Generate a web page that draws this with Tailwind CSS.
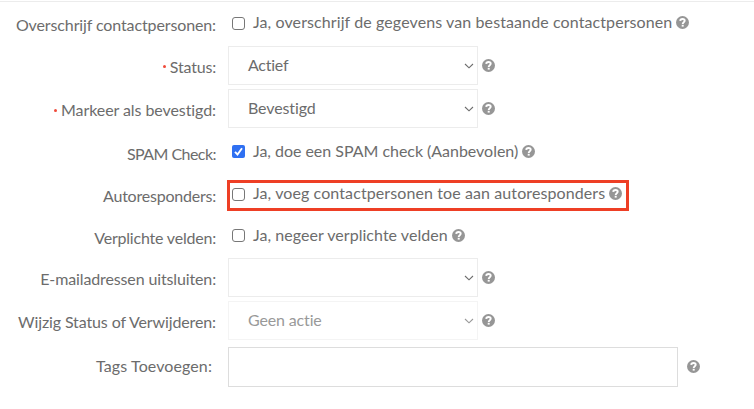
<!DOCTYPE html>
<html lang="nl"><head><meta charset="utf-8"><title>Importinstellingen</title>
<script src="https://cdn.jsdelivr.net/npm/@tailwindcss/browser@4"></script></head>
<body class="bg-white">
<svg class="hidden">
<symbol id="help" viewBox="0 0 13 13"><circle cx="6.5" cy="6.5" r="6.5" fill="#969696"/><path d="M4.200 4.900C4.300 3.600 5.200 3 6.500 3c1.300 0 2.200.65 2.200 1.800C8.700 6.200 6.700 6.150 6.700 7.900" fill="none" stroke="#fff" stroke-width="1.900"/><rect x="5.700" y="8.800" width="2" height="1.800" fill="#fff"/></symbol>
<symbol id="chev" viewBox="0 0 10 6"><path d="M1 1l4 3.800L9 1" fill="none" stroke="currentColor" stroke-width="1.100"/></symbol>
</svg>
<form class="w-[754px] h-[409px] overflow-hidden pt-px font-['Lato',sans-serif] text-[16px] leading-6 text-[#6c6c6c] whitespace-nowrap">
<div class="border-t border-[#ececec]"></div>
<div class="flex h-[42px] items-center gap-3"><label class="w-[204px] ml-3 text-right pt-[3px]"><span class="tracking-[-0.12px]">Overschrijf contactpersonen:</span></label><div class="flex items-center pl-1"><i class="size-[13px] rounded-[3px] border border-[#777] mr-2"></i><span class="tracking-[0.1px] pb-[2px]">Ja, overschrijf de gegevens van bestaande contactpersonen</span><svg class="size-[13px] ml-1 -mt-px"><use href="#help"/></svg></div></div>
<div class="flex h-[43px] items-center gap-3"><label class="w-[204px] ml-3 flex items-center justify-end gap-1 pt-[2px]"><i class="size-[3px] rounded-full bg-[#f04a3a]"></i><span class="tracking-[-0.18px]">Status:</span></label><div class="flex items-center"><div class="flex w-[250px] h-[39px] items-center justify-between border border-[#ececec] pl-[19px] pr-[3px]"><span class="tracking-[-0.25px] pb-[2px]">Actief</span><svg class="w-[10px] h-[6px]"><use href="#chev"/></svg></div><svg class="size-[13px] ml-1"><use href="#help"/></svg></div></div>
<div class="flex h-[43px] items-center gap-3"><label class="w-[204px] ml-3 flex items-center justify-end gap-1 pt-[3px]"><i class="size-[3px] rounded-full bg-[#f04a3a]"></i><span class="tracking-[-0.08px]">Markeer als bevestigd:</span></label><div class="flex items-center"><div class="flex w-[250px] h-[39px] items-center justify-between border border-[#ececec] pl-[19px] pr-[3px]"><span class="tracking-[-0.12px] pb-px">Bevestigd</span><svg class="w-[10px] h-[6px]"><use href="#chev"/></svg></div><svg class="size-[13px] ml-1"><use href="#help"/></svg></div></div>
<div class="flex h-[43px] items-center gap-3"><label class="w-[204px] ml-3 text-right pt-[4px]"><span class="tracking-[-0.55px]">SPAM Check:</span></label><div class="flex items-center pl-1"><svg class="size-[13px] mr-2" viewBox="0 0 13 13"><rect width="13" height="13" rx="2" fill="#2f70f2"/><path d="M3 6.800l2.500 2.700L10 3.300" fill="none" stroke="#fff" stroke-width="1.900"/></svg><span class="tracking-[-0.03px] pb-[2px]">Ja, doe een SPAM check (Aanbevolen)</span><svg class="size-[13px] ml-1"><use href="#help"/></svg></div></div>
<div class="flex h-[42px] items-center gap-3"><label class="w-[204px] ml-3 text-right pt-[3px]"><span class="tracking-[-0.22px]">Autoresponders:</span></label><div class="flex items-center w-[402px] h-[31px] -ml-px border-[3px] border-[#ee3f25] pl-[2px] mt-[2px] pb-[2px]"><i class="size-[13px] rounded-[3px] border border-[#777] mr-2"></i><span class="tracking-[0.1px] pb-[2px]">Ja, voeg contactpersonen toe aan autoresponders</span><svg class="size-[13px] ml-1 -mt-px"><use href="#help"/></svg></div></div>
<div class="flex h-[41px] items-center gap-3"><label class="w-[204px] ml-3 text-right pt-[4px]"><span class="tracking-[-0.2px]">Verplichte velden:</span></label><div class="flex items-center pl-1"><i class="size-[13px] rounded-[3px] border border-[#777] mr-2"></i><span class="tracking-[0.04px] pb-[2px]">Ja, negeer verplichte velden</span><svg class="size-[13px] ml-1 -mt-px"><use href="#help"/></svg></div></div>
<div class="flex h-[43px] items-center gap-3"><label class="w-[204px] ml-3 text-right pt-[3px]"><span class="tracking-[-0.13px]">E-mailadressen uitsluiten:</span></label><div class="flex items-center"><div class="flex w-[250px] h-[39px] items-center justify-end border border-[#ececec] pr-[3px]"><svg class="w-[10px] h-[6px]"><use href="#chev"/></svg></div><svg class="size-[13px] ml-1"><use href="#help"/></svg></div></div>
<div class="flex h-[43px] items-center gap-3"><label class="w-[204px] ml-3 text-right pt-[3px]"><span class="tracking-[-0.12px]">Wijzig Status of Verwijderen:</span></label><div class="flex items-center"><div class="flex w-[250px] h-[39px] items-center justify-between border border-[#f4f4f4] text-[#999] pl-[19px] pr-[3px]"><span class="tracking-[-0.15px] pb-[2px]">Geen actie</span><svg class="w-[10px] h-[6px]"><use href="#chev"/></svg></div><svg class="size-[13px] ml-1"><use href="#help"/></svg></div></div>
<div class="flex h-[49px] items-center gap-3"><label class="w-[204px] ml-3 pr-1 text-right pb-[2px]"><span class="tracking-[0.1px]">Tags Toevoegen:</span></label><div class="flex items-center"><div class="w-[450px] h-[40px] border border-[#ddd]"></div><svg class="size-[13px] ml-[9px]"><use href="#help"/></svg></div></div>
</form></body></html>
